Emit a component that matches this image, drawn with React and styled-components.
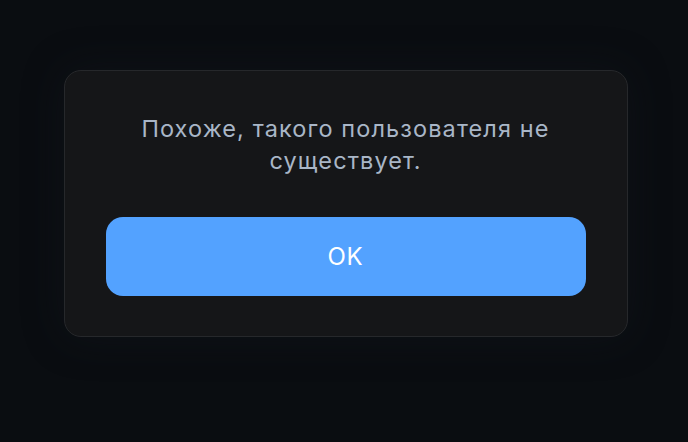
import React from 'react'
import styled, { createGlobalStyle } from 'styled-components';

const GlobalStyle = createGlobalStyle`
  html, body {
    margin: 0;
    padding: 0;
    background: #0a0d11;
    font-family: Inter, "Noto Sans", sans-serif;
  }
`;

const App = () => {
    return (
        <Page>
            <GlobalStyle />
            <Dialog>
                <Message>Похоже, такого пользователя не существует.</Message>
                <OkButton>OK</OkButton>
            </Dialog>
        </Page>
    )
}

export default App;

const Page = styled.div`
  width: 688px;
  height: 442px;
  display: flex;
  justify-content: center;
  align-items: flex-start;
  padding-top: 70px;
  box-sizing: border-box;
`;

const Dialog = styled.div`
  width: 564px;
  height: 267px;
  box-sizing: border-box;
  margin-left: 3px;
  padding: 42px 41px 40px 41px;
  background: #151618;
  border: 1px solid #26282b;
  border-radius: 17px;
  box-shadow: 0 0 40px rgba(20, 24, 30, 0.45);
  display: flex;
  flex-direction: column;
  align-items: stretch;
  gap: 40px;
`;

const Message = styled.p`
  margin: 0;
  padding: 0 20px;
  text-align: center;
  color: #a9b6c7;
  font-size: 23.5px;
  letter-spacing: 1.1px;
  line-height: 32px;
`;

const OkButton = styled.button`
  height: 80px;
  border: none;
  border-radius: 17px;
  background: #53a2ff;
  color: #ffffff;
  font-family: Inter, "Noto Sans", sans-serif;
  font-size: 24px;
  font-weight: 400;
  letter-spacing: 0.8px;
  cursor: pointer;
`;
